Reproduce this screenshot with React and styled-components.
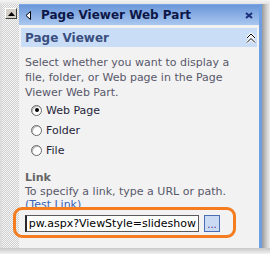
import React from 'react';
import styled, { createGlobalStyle } from 'styled-components';

const GlobalStyle = createGlobalStyle`
  html, body {
    margin: 0;
    padding: 0;
    background: #ffffff;
  }
  body {
    font-family: 'DejaVu Sans', Verdana, sans-serif;
  }
`;

const Screen = styled.div`
  position: relative;
  display: flex;
  flex-direction: column;
  width: 270px;
  height: 254px;
  overflow: hidden;
  background: #ffffff;
`;
const TopEdge = styled.div`
  height: 4px;
  background: linear-gradient(#f4f4f4, #e4e4e4);
`;
const Middle = styled.div`
  display: flex;
  height: 244px;
`;
const LeftRail = styled.div`
  display: flex;
  flex-direction: column;
  width: 19px;
  background: repeating-conic-gradient(#cfcfcf 0 25%, #f6f6f6 0 50%) 0 0 / 2px 2px;
  border-left: 2px solid #dcdcdc;
  box-sizing: border-box;
`;
const ScrollButton = styled.div`
  display: flex;
  align-items: center;
  justify-content: center;
  width: 12px;
  height: 11px;
  margin: 4px 0 0 3px;
  background: #d4d0c8;
  border: 1px solid;
  border-color: #ffffff #404040 #404040 #ffffff;
  box-sizing: border-box;
`;
const Pane = styled.div`
  display: flex;
  flex-direction: column;
  width: 243px;
  border-right: 3px solid #6f9fe3;
  box-sizing: border-box;
`;
const Header = styled.div`
  display: flex;
  align-items: center;
  height: 21px;
  padding: 0 6px;
  background: linear-gradient(#6b97d9, #a9c7ef);
  border-top: 1px solid #7fa7e2;
  box-sizing: border-box;
`;
const HeaderTitle = styled.span`
  flex: 1;
  margin-left: 9px;
  font-size: 12px;
  font-weight: bold;
  color: #0d1747;
  white-space: nowrap;
`;
const Body = styled.div`
  flex: 1;
  display: flex;
  flex-direction: column;
  background: #f2f2f2;
  padding: 3px 2px 0 2px;
`;
const SectionBar = styled.div`
  display: flex;
  align-items: center;
  justify-content: space-between;
  height: 19px;
  padding: 0 1px 0 4px;
  background: #c9ddf6;
`;
const SectionTitle = styled.span`
  font-size: 12px;
  font-weight: bold;
  color: #3a4f7f;
`;
const Content = styled.div`
  display: flex;
  flex-direction: column;
  padding: 8px 4px 0 4px;
`;
const Description = styled.p`
  margin: 0;
  font-size: 11px;
  line-height: ${(p) => p.$lh || 15}px;
  color: #58586a;
`;
const RadioList = styled.div`
  display: flex;
  flex-direction: column;
  padding: 0 0 0 6px;
`;
const RadioRow = styled.label`
  display: flex;
  align-items: center;
  gap: 4px;
  height: 20px;
  font-size: 11px;
  color: #26263a;
`;
const RadioCircle = styled.span`
  display: flex;
  align-items: center;
  justify-content: center;
  width: 11px;
  height: 11px;
  border-radius: 50%;
  background: #ffffff;
  border: 1px solid #6a6a6a;
  box-shadow: inset 1px 1px 0 #b8b8b8;
  box-sizing: border-box;
`;
const RadioDot = styled.span`
  width: 4px;
  height: 4px;
  border-radius: 50%;
  background: #000000;
`;
const FieldLabel = styled.div`
  margin-top: 10px;
  font-size: 11px;
  font-weight: bold;
  line-height: 15px;
  color: #666666;
`;
const TestLink = styled.a`
  color: #3a63b8;
  text-decoration: none;
`;
const InputRow = styled.div`
  display: flex;
  align-items: center;
  gap: 5px;
  margin-top: 4px;
`;
const TextBox = styled.div`
  display: flex;
  align-items: center;
  justify-content: flex-end;
  width: 174px;
  height: 17px;
  padding-right: 2px;
  background: #ffffff;
  border: 1px solid #5a5a5a;
  border-left: 2px solid #2a2a2a;
  box-sizing: border-box;
  font-size: 11px;
  color: #000000;
  white-space: nowrap;
  overflow: hidden;
`;
const BrowseButton = styled.div`
  display: flex;
  align-items: flex-end;
  justify-content: center;
  flex-shrink: 0;
  width: 16px;
  height: 17px;
  background: #cbdaf3;
  border: 1px solid #4a6db5;
  box-sizing: border-box;
  font-size: 10px;
  line-height: 12px;
  color: #4b2a8a;
`;
const Shadow = styled.div`
  width: 8px;
  background: linear-gradient(to right, #9a9a9a, #d0d0d0 60%, #ececec);
`;
const BottomEdge = styled.div`
  height: 6px;
  background: linear-gradient(#c8c8c8, #f2f2f2);
`;
const Callout = styled.div`
  position: absolute;
  left: 13px;
  top: 207px;
  width: 223px;
  height: 31px;
  border: 3px solid #f57d1f;
  border-radius: 9px;
  box-sizing: border-box;
  pointer-events: none;
`;

const UpTriangle = () => (
  <svg width="7" height="4" viewBox="0 0 7 4">
    <path d="M3.5 0 L7 4 L0 4 Z" fill="#000" />
  </svg>
);
const BackArrow = () => (
  <svg width="7" height="9" viewBox="0 0 7 9">
    <path d="M5.5 0.5 L1 4.5 L5.5 8.5 Z" fill="#fff" stroke="#000" strokeWidth="1" />
  </svg>
);
const CloseIcon = () => (
  <svg width="8" height="7" viewBox="0 0 8 7">
    <path d="M1 1 L7 6 M7 1 L1 6" stroke="#1b2f7a" strokeWidth="2" />
  </svg>
);
const CollapseIcon = () => (
  <svg width="10" height="12" viewBox="0 0 10 12">
    <path d="M1 6 L5 2 L9 6 M1 10.5 L5 6.5 L9 10.5" fill="none" stroke="#fff" strokeWidth="2.5" />
    <path d="M1 6 L5 2 L9 6 M1 10.5 L5 6.5 L9 10.5" fill="none" stroke="#000" strokeWidth="1" />
  </svg>
);

const options = ['Web Page', 'Folder', 'File'];

const App = () => {
  return (
    <Screen>
      <GlobalStyle />
      <TopEdge />
      <Middle>
        <LeftRail>
          <ScrollButton>
            <UpTriangle />
          </ScrollButton>
        </LeftRail>
        <Pane>
          <Header>
            <BackArrow />
            <HeaderTitle>Page Viewer Web Part</HeaderTitle>
            <CloseIcon />
          </Header>
          <Body>
            <SectionBar>
              <SectionTitle>Page Viewer</SectionTitle>
              <CollapseIcon />
            </SectionBar>
            <Content>
              <Description>
                Select whether you want to display a file, folder, or Web page in the Page
                Viewer Web Part.
              </Description>
              <RadioList>
                {options.map((o, i) => (
                  <RadioRow key={o}>
                    <RadioCircle>{i === 0 && <RadioDot />}</RadioCircle>
                    {o}
                  </RadioRow>
                ))}
              </RadioList>
              <FieldLabel>Link</FieldLabel>
              <Description $lh={13}>
                To specify a link, type a URL or path.
                <br />
                <TestLink>(Test Link)</TestLink>
              </Description>
              <InputRow>
                <TextBox>pw.aspx?ViewStyle=slideshow</TextBox>
                <BrowseButton>...</BrowseButton>
              </InputRow>
            </Content>
          </Body>
        </Pane>
        <Shadow />
      </Middle>
      <BottomEdge />
      <Callout />
    </Screen>
  );
};

export default App;
